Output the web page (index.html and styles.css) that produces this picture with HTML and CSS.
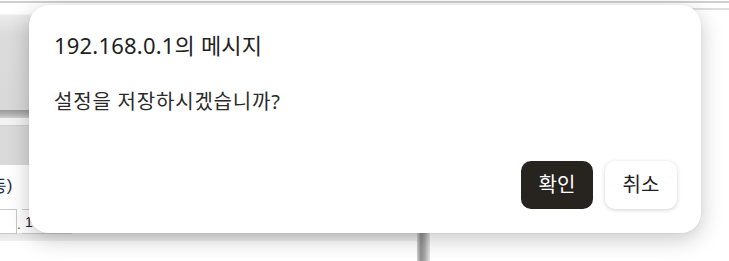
FILE: index.html
```html
<!DOCTYPE html>
<html>
	<head>
		<meta charset="UTF-8">
		<title>192.168.0.1</title>
		<link rel="stylesheet" href="styles.css">
	</head>
	<body>
		<div class="page">
			<div class="topline"></div>
			<div class="main">
				<div class="left">
					<div class="toolbar"></div>
					<div class="band"></div>
					<div class="band-light"></div>
					<div class="tabbar"></div>
					<div class="form">
						<div class="label">(수동)</div>
						<div class="ip">
							<span class="ipbox"></span><span class="dot">.</span><span class="ipbox wide">1</span>
						</div>
					</div>
					<div class="strip"></div>
				</div>
				<div class="divider"></div>
				<div class="right">
					<div class="rline"></div>
				</div>
			</div>
		</div>

		<div class="dialog">
			<div class="title">192.168.0.1의 메시지</div>
			<div class="msg">설정을 저장하시겠습니까?</div>
			<div class="actions">
				<a href="javascript:;" class="btn ok">확인</a>
				<a href="javascript:;" class="btn cancel">취소</a>
			</div>
		</div>
	</body>
</html>
```

FILE: styles.css
```css
*{
	margin:0px;
	padding:0px;
	box-sizing:border-box;
}
body{
	background:#fff;
	font-family:"Noto Sans","Noto Sans CJK KR",sans-serif;
	overflow:hidden;
}
.page{
	width:729px;
	height:261px;
}
.topline{
	height:2px;
	margin-top:1px;
	background:#cfcfcf;
}
.main{
	display:flex;
	height:258px;
}
.left{
	width:417px;
	padding-top:11px;
}
.toolbar{
	height:96px;
	background:linear-gradient(#ebebeb,#dcdcdc 20%,#d9d9d9);
	border-top:1px solid #f4f4f4;
}
.band{
	height:8px;
	background:linear-gradient(#9a9a9a,#b5b5b5 60%,#cfcfcf);
}
.band-light{
	height:7px;
	background:#f3f3f3;
}
.tabbar{
	height:40px;
	background:#dadada;
	border-top:1px solid #cfcfcf;
}
.form{
	height:68px;
	background:#fff;
	display:flex;
	flex-direction:column;
	gap:13px;
	padding-top:11px;
}
.label{
	font-family:"Liberation Sans",sans-serif;
	font-size:17px;
	line-height:20px;
	color:#1d2b4f;
	margin-left:-33px;
}
.ip{
	display:flex;
	align-items:flex-end;
	height:25px;
}
.ipbox{
	display:inline-block;
	width:17px;
	height:25px;
	border:1px solid #c8c8c8;
	border-left:none;
	font-family:"Liberation Sans",sans-serif;
	font-size:14px;
	line-height:24px;
	color:#222;
	padding-left:3px;
}
.ipbox.wide{
	width:50px;
}
.dot{
	width:5px;
	font-family:"Liberation Sans",sans-serif;
	font-size:14px;
	line-height:20px;
	color:#8a5a2a;
}
.strip{
	height:8px;
	background:linear-gradient(#e4e4e4,#f0f0f0);
}
.divider{
	width:13px;
	margin-top:12px;
	background:linear-gradient(90deg,#cfcfcf,#8e8e8e 30%,#a9a9a9 60%,#e6e6e6);
}
.right{
	flex:1;
	padding-top:5px;
}
.rline{
	height:2px;
	background:#dedede;
}

.dialog{
	position:absolute;
	left:29px;
	top:5px;
	width:672px;
	height:228px;
	background:#fff;
	border-radius:20px;
	box-shadow:0 6px 22px rgba(0,0,0,0.22),0 0 2px rgba(0,0,0,0.08);
	padding:24px 24px 24px 25px;
	display:flex;
	flex-direction:column;
	color:#1f1f1f;
}
.title{
	font-size:22px;
	line-height:32px;
	letter-spacing:0.2px;
}
.msg{
	font-size:20px;
	line-height:26px;
	letter-spacing:0.8px;
	margin-top:28px;
	color:#2a2a2a;
}
.actions{
	margin-top:auto;
	display:flex;
	justify-content:flex-end;
	gap:12px;
}
.btn{
	display:inline-block;
	width:72px;
	height:48px;
	border-radius:10px;
	text-align:center;
	line-height:48px;
	font-size:20px;
	text-decoration:none;
}
.ok{
	background:#27231f;
	color:#fff;
}
.cancel{
	background:#fff;
	color:#1f1f1f;
	box-shadow:0 1px 4px rgba(0,0,0,0.18);
}
```
